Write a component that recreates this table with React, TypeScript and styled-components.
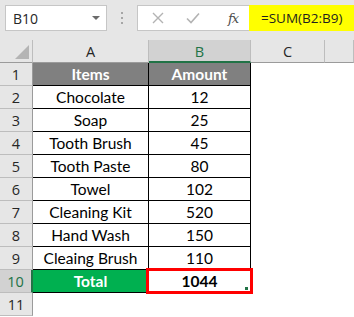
import { Fragment } from "react";
import styled, { createGlobalStyle } from "styled-components";

const GlobalStyle = createGlobalStyle`
  html, body {
    margin: 0;
    padding: 0;
    background: #ffffff;
  }
  body {
    width: 354px;
    height: 317px;
    overflow: hidden;
  }
`;

const Sheet = styled.div`
  width: 354px;
  height: 317px;
  display: flex;
  flex-direction: column;
  background: #ffffff;
  font-family: "Open Sans", "Noto Sans", sans-serif;
`;

const FormulaBar = styled.div`
  height: 40px;
  display: flex;
  align-items: flex-start;
  padding: 5px 0 0 5px;
  box-sizing: border-box;
  background: #e6e6e6;
`;

const NameBox = styled.div`
  width: 102px;
  height: 26px;
  box-sizing: border-box;
  border: 1px solid #c6c6c6;
  background: #ffffff;
  display: flex;
  align-items: center;
  justify-content: space-between;
  padding: 0 6px 0 7px;
  font-size: 14px;
  color: #262626;
`;

const Caret = styled.span`
  width: 0;
  height: 0;
  border-left: 4px solid transparent;
  border-right: 4px solid transparent;
  border-top: 4px solid #6b6b6b;
`;

const Grip = styled.div`
  width: 30px;
  height: 26px;
  display: flex;
  flex-direction: column;
  align-items: center;
  justify-content: center;
  gap: 3px;
`;

const GripDot = styled.span`
  width: 2px;
  height: 2px;
  background: #a6a6a6;
`;

const ActionBox = styled.div`
  width: 112px;
  height: 26px;
  box-sizing: border-box;
  border: 1px solid #c6c6c6;
  border-right: none;
  background: #ffffff;
  display: flex;
  align-items: center;
  padding: 0 0 0 14px;
  gap: 22px;
`;

const Fx = styled.span`
  margin-left: 6px;
  font-family: "DejaVu Serif", "Liberation Serif", serif;
  font-style: italic;
  font-size: 13px;
  color: #4d4d4d;
  letter-spacing: -1px;
`;

const FormulaInput = styled.div`
  flex: 1;
  height: 26px;
  box-sizing: border-box;
  background: #ffff00;
  display: flex;
  align-items: center;
  padding-left: 12px;
  font-size: 13.5px;
  color: #1f1f1f;
`;

const Grid = styled.div`
  display: grid;
  grid-template-columns: 33px 116px 102px 74px 1fr;
  grid-template-rows: repeat(12, 23px);
  flex: 1;
`;

const Corner = styled.div`
  background: #e6e6e6;
  border-right: 1px solid #bdbdbd;
  border-bottom: 1px solid #9b9b9b;
  box-sizing: border-box;
  display: flex;
  align-items: flex-end;
  justify-content: flex-end;
  padding: 0 3px 3px 0;
`;

const CornerTriangle = styled.span`
  width: 0;
  height: 0;
  border-left: 14px solid transparent;
  border-bottom: 14px solid #b4b4b4;
`;

const ColHead = styled.div<{ $selected?: boolean }>`
  background: ${(p) => (p.$selected ? "#d2d2d2" : "#e6e6e6")};
  color: ${(p) => (p.$selected ? "#217346" : "#262626")};
  border-right: 1px solid #bdbdbd;
  border-bottom: ${(p) => (p.$selected ? "2px solid #217346" : "1px solid #9b9b9b")};
  box-sizing: border-box;
  display: flex;
  align-items: center;
  justify-content: center;
  font-size: 14.5px;
  padding-top: 1px;
`;

const RowHead = styled.div<{ $selected?: boolean }>`
  background: ${(p) => (p.$selected ? "#d2d2d2" : "#e6e6e6")};
  color: ${(p) => (p.$selected ? "#217346" : "#262626")};
  border-right: ${(p) => (p.$selected ? "2px solid #217346" : "1px solid #9b9b9b")};
  border-bottom: 1px solid #bdbdbd;
  box-sizing: border-box;
  display: flex;
  align-items: center;
  justify-content: center;
  font-size: 14.5px;
`;

const Cell = styled.div<{ $fill?: string; $bold?: boolean }>`
  background: ${(p) => p.$fill ?? "#ffffff"};
  color: ${(p) => (p.$fill ? "#ffffff" : "#000000")};
  font-weight: ${(p) => (p.$bold ? 700 : 400)};
  border-right: 1px solid #000000;
  border-bottom: 1px solid #000000;
  box-sizing: border-box;
  display: flex;
  align-items: center;
  justify-content: center;
  font-family: "Lato", "Open Sans", sans-serif;
  font-size: 15.5px;
  position: relative;
`;

const Blank = styled.div`
  background: #ffffff;
`;

const ActiveFrame = styled.div`
  position: absolute;
  left: -3px;
  top: -2px;
  right: -3px;
  bottom: -2px;
  border: 3px solid #ff0000;
  pointer-events: none;
`;

const FillHandle = styled.span`
  position: absolute;
  right: 2px;
  bottom: 2px;
  width: 3px;
  height: 3px;
  background: #217346;
`;

const items: [string, string][] = [
  ["Chocolate", "12"],
  ["Soap", "25"],
  ["Tooth Brush", "45"],
  ["Tooth Paste", "80"],
  ["Towel", "102"],
  ["Cleaning Kit", "520"],
  ["Hand Wash", "150"],
  ["Cleaing Brush", "110"],
];

export default function App() {
  return (
    <>
      <GlobalStyle />
      <Sheet>
        <FormulaBar>
          <NameBox>
            B10
            <Caret />
          </NameBox>
          <Grip>
            <GripDot />
            <GripDot />
            <GripDot />
          </Grip>
          <ActionBox>
            <svg width="12" height="12" viewBox="0 0 12 12">
              <path d="M1 1 L11 11 M11 1 L1 11" stroke="#b3b3b3" strokeWidth="1.4" fill="none" />
            </svg>
            <svg width="14" height="12" viewBox="0 0 14 12">
              <path d="M1 6.5 L5 10.5 L13 1.5" stroke="#b3b3b3" strokeWidth="1.6" fill="none" />
            </svg>
            <Fx>fx</Fx>
          </ActionBox>
          <FormulaInput>=SUM(B2:B9)</FormulaInput>
        </FormulaBar>
        <Grid>
          <Corner>
            <CornerTriangle />
          </Corner>
          <ColHead>A</ColHead>
          <ColHead $selected>B</ColHead>
          <ColHead>C</ColHead>
          <ColHead />

          <RowHead>1</RowHead>
          <Cell $fill="#808080" $bold>Items</Cell>
          <Cell $fill="#808080" $bold>Amount</Cell>
          <Blank />
          <Blank />

          {items.map(([name, amount], i) => (
            <Fragment key={name}>
              <RowHead>{i + 2}</RowHead>
              <Cell>{name}</Cell>
              <Cell>{amount}</Cell>
              <Blank />
              <Blank />
            </Fragment>
          ))}

          <RowHead $selected>10</RowHead>
          <Cell $fill="#00b050" $bold>Total</Cell>
          <Cell $bold>
            1044
            <ActiveFrame />
            <FillHandle />
          </Cell>
          <Blank />
          <Blank />

          <RowHead>11</RowHead>
          <Blank />
          <Blank />
          <Blank />
          <Blank />
        </Grid>
      </Sheet>
    </>
  );
}
